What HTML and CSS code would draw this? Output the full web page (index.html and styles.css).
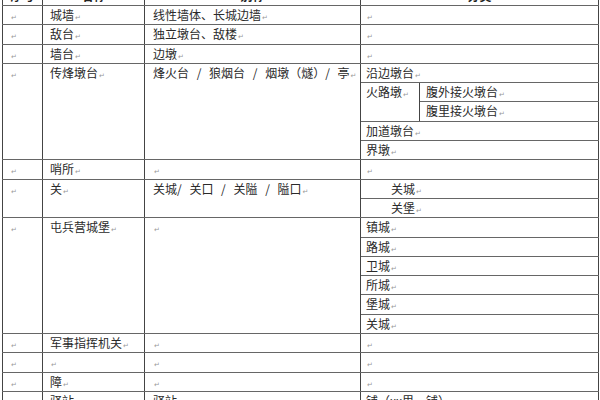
FILE: index.html
```html
<!DOCTYPE html>
<html lang="zh">
<head>
<meta charset="utf-8">
<link rel="stylesheet" href="styles.css">
</head>
<body>
<table class="grid">
  <colgroup>
    <col class="c1"><col class="c2"><col class="c3"><col class="c4"><col class="c5">
  </colgroup>
  <tr class="head">
    <th>序号</th><th>名称</th><th>别称</th><th colspan="2">分类</th>
  </tr>
  <tr>
    <td class="n"><span class="pm">↵</span></td><td class="a">城墙<span class="pm">↵</span></td><td class="b">线性墙体、长城边墙<span class="pm">↵</span></td><td class="d" colspan="2"><span class="pm">↵</span></td>
  </tr>
  <tr>
    <td class="n"><span class="pm">↵</span></td><td class="a">敌台<span class="pm">↵</span></td><td class="b">独立墩台、敌楼<span class="pm">↵</span></td><td class="d" colspan="2"><span class="pm">↵</span></td>
  </tr>
  <tr>
    <td class="n"><span class="pm">↵</span></td><td class="a">墙台<span class="pm">↵</span></td><td class="b">边墩<span class="pm">↵</span></td><td class="d" colspan="2"><span class="pm">↵</span></td>
  </tr>
  <tr>
    <td class="n" rowspan="5"><span class="pm">↵</span></td><td class="a" rowspan="5">传烽墩台<span class="pm">↵</span></td><td class="b" rowspan="5">烽火台 / 狼烟台 / 烟墩（燧）/ 亭<span class="pm">↵</span></td><td class="d" colspan="2">沿边墩台<span class="pm">↵</span></td>
  </tr>
  <tr>
    <td class="d" rowspan="2">火路墩<span class="pm">↵</span></td><td class="e">腹外接火墩台<span class="pm">↵</span></td>
  </tr>
  <tr>
    <td class="e">腹里接火墩台<span class="pm">↵</span></td>
  </tr>
  <tr>
    <td class="d" colspan="2">加道墩台<span class="pm">↵</span></td>
  </tr>
  <tr>
    <td class="d" colspan="2">界墩<span class="pm">↵</span></td>
  </tr>
  <tr>
    <td class="n"><span class="pm">↵</span></td><td class="a">哨所<span class="pm">↵</span></td><td class="b"><span class="pm">↵</span></td><td class="d" colspan="2"><span class="pm">↵</span></td>
  </tr>
  <tr>
    <td class="n" rowspan="2"><span class="pm">↵</span></td><td class="a" rowspan="2">关<span class="pm">↵</span></td><td class="b" rowspan="2">关城/ 关口 / 关隘 / 隘口<span class="pm">↵</span></td><td class="d ind" colspan="2">关城<span class="pm">↵</span></td>
  </tr>
  <tr>
    <td class="d ind" colspan="2">关堡<span class="pm">↵</span></td>
  </tr>
  <tr>
    <td class="n" rowspan="6"><span class="pm">↵</span></td><td class="a" rowspan="6">屯兵营城堡<span class="pm">↵</span></td><td class="b" rowspan="6"><span class="pm">↵</span></td><td class="d" colspan="2">镇城<span class="pm">↵</span></td>
  </tr>
  <tr><td class="d" colspan="2">路城<span class="pm">↵</span></td></tr>
  <tr><td class="d" colspan="2">卫城<span class="pm">↵</span></td></tr>
  <tr><td class="d" colspan="2">所城<span class="pm">↵</span></td></tr>
  <tr><td class="d" colspan="2">堡城<span class="pm">↵</span></td></tr>
  <tr><td class="d" colspan="2">关城<span class="pm">↵</span></td></tr>
  <tr>
    <td class="n"><span class="pm">↵</span></td><td class="a">军事指挥机关<span class="pm">↵</span></td><td class="b"><span class="pm">↵</span></td><td class="d" colspan="2"><span class="pm">↵</span></td>
  </tr>
  <tr>
    <td class="n"><span class="pm">↵</span></td><td class="a"><span class="pm">↵</span></td><td class="b"><span class="pm">↵</span></td><td class="d" colspan="2"><span class="pm">↵</span></td>
  </tr>
  <tr>
    <td class="n"><span class="pm">↵</span></td><td class="a">障<span class="pm">↵</span></td><td class="b"><span class="pm">↵</span></td><td class="d" colspan="2"><span class="pm">↵</span></td>
  </tr>
  <tr>
    <td class="n"><span class="pm">↵</span></td><td class="a">驿站<span class="pm">↵</span></td><td class="b">驿站<span class="pm">↵</span></td><td class="d" colspan="2">铺（xx里一铺）<span class="pm">↵</span></td>
  </tr>
</table>
</body>
</html>
```

FILE: styles.css
```css
html, body {
  margin: 0;
  padding: 0;
  background: #ffffff;
  overflow: hidden;
}
body {
  width: 600px;
  height: 400px;
  font-family: "Noto Sans CJK SC", "Liberation Sans", sans-serif;
  font-size: 12px;
  color: #2a2a2a;
}
.grid {
  border-collapse: collapse;
  table-layout: fixed;
  width: 596px;
  margin: -17px 0 0 2px;
}
.c1 { width: 40px; }
.c2 { width: 102px; }
.c3 { width: 216px; }
.c4 { width: 59px; }
.c5 { width: 179px; }
.grid th, .grid td {
  border-top: 1px solid #666666;
  border-bottom: 1px solid #666666;
  border-left: 1px solid #444444;
  border-right: 1px solid #444444;
  height: 18.3px;
  padding: 0;
  line-height: 18px;
  vertical-align: top;
  text-align: left;
  white-space: nowrap;
  overflow: hidden;
}
.grid .head th {
  text-align: center;
  font-weight: bold;
  color: #222222;
  line-height: 18px;
  padding-top: 3px;
  height: 15.3px;
}
.grid td.n { padding-left: 7px; }
.grid td.a { padding-left: 7px; }
.grid td.b { padding-left: 8px; white-space: pre; word-spacing: 5px; }
.grid td.d { padding-left: 5px; }
.grid td.e { padding-left: 6px; }
.grid td.ind { padding-left: 30px; }
.pm {
  font-family: "DejaVu Sans", sans-serif;
  font-size: 7px;
  line-height: 0;
  vertical-align: baseline;
  color: #999999;
  margin-left: 1px;
  word-spacing: 0;
}
```
